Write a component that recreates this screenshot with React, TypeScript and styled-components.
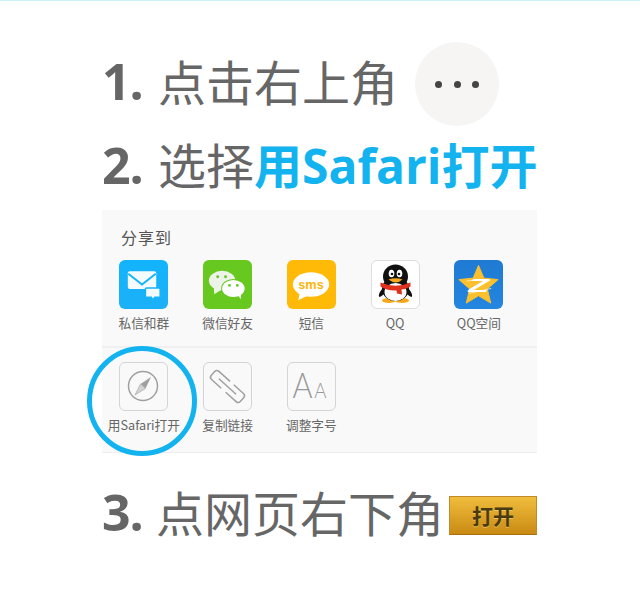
import { ReactElement, ReactNode } from "react";
import styled, { createGlobalStyle } from "styled-components";

const GlobalStyle = createGlobalStyle`
  html, body {
    margin: 0;
    padding: 0;
    background: #fff;
    font-family: "Noto Sans CJK SC", "Liberation Sans", sans-serif;
  }
`;

const Page = styled.div`
  width: 640px;
  height: 600px;
  box-sizing: border-box;
  border-top: 1px solid #cdeefb;
  padding: 41px 0 0 102px;
  overflow: hidden;
`;

const Content = styled.div`
  width: 435px;
  display: flex;
  flex-direction: column;
`;

const Step = styled.div<{ $gap?: number }>`
  height: 84px;
  margin-top: ${(p) => p.$gap ?? 0}px;
  display: flex;
  align-items: center;
  color: #666;
  font-size: 48px;
  line-height: 1;
  white-space: nowrap;
`;

const StepText = styled.span`
  margin-bottom: 8px;
`;

const Number = styled.span<{ $width: number }>`
  width: ${(p) => p.$width}px;
  flex: none;
  margin-bottom: 6px;
  font-family: "Open Sans", sans-serif;
  font-weight: 700;
  font-size: 50px;
  letter-spacing: -1px;
`;

const Highlight = styled.span`
  color: #12b3ee;
  font-weight: 700;
`;

const Latin = styled.span`
  font-family: "Open Sans", "Noto Sans CJK SC", sans-serif;
`;

const MoreButton = styled.div`
  width: 84px;
  height: 84px;
  margin-left: 17px;
  border-radius: 50%;
  background: #f6f5f4;
  display: flex;
  align-items: center;
  justify-content: center;
  gap: 11.5px;
`;

const Dot = styled.i`
  width: 7px;
  height: 7px;
  border-radius: 50%;
  background: #444;
`;

const Panel = styled.div`
  background: #f9f9f9;
  border-bottom: 1px solid #eee;
  height: 242px;
  display: flex;
  flex-direction: column;
`;

const PanelTitle = styled.div`
  padding: 16px 0 0 19px;
  height: 33px;
  font-size: 16px;
  line-height: 22px;
  letter-spacing: 1px;
  color: #555;
`;

const ShareRow = styled.div`
  height: 86px;
  padding-top: 1px;
  display: grid;
  grid-template-columns: repeat(5, 83.75px);
  align-content: start;
`;

const ToolRow = styled(ShareRow)`
  border-top: 2px solid #f0f0f0;
  height: auto;
  padding-top: 14px;
`;

const Cell = styled.div`
  position: relative;
  display: flex;
  flex-direction: column;
  align-items: center;
`;

const Tile = styled.div<{ $bg: string; $border?: string }>`
  width: 49px;
  height: 49px;
  box-sizing: border-box;
  border-radius: 6px;
  background: ${(p) => p.$bg};
  border: ${(p) => (p.$border ? `1.5px solid ${p.$border}` : "none")};
  overflow: hidden;
  svg {
    display: block;
    width: 100%;
    height: 100%;
  }
`;

const Label = styled.div`
  margin-top: 5px;
  font-size: 12.7px;
  line-height: 18px;
  color: #666;
  white-space: nowrap;
`;

const Ring = styled.div`
  position: absolute;
  left: -15px;
  top: -16px;
  width: 110px;
  height: 110px;
  box-sizing: border-box;
  border: 5px solid #12b3ee;
  border-radius: 50%;
  pointer-events: none;
`;

const OpenButton = styled.div`
  width: 88px;
  height: 39px;
  margin-left: 5px;
  box-sizing: border-box;
  border: 1px solid #c08a28;
  border-bottom-color: #a8700f;
  background: linear-gradient(#f0bd3c, #c98a14);
  display: flex;
  align-items: center;
  justify-content: center;
  font-size: 21px;
  font-weight: 700;
  color: #4a3a12;
  text-shadow: 0 1px 0 rgba(255, 230, 150, 0.5);
`;

const MailIcon = () => (
  <svg viewBox="0 0 50 50">
    <rect x="9" y="11.5" width="29" height="18" rx="2" fill="#f4fbff" />
    <path d="M9.5 14 L23.5 25 L37.5 14" fill="none" stroke="#16b4fb" strokeWidth="2" />
    <path d="M28 28.5 H41 a1 1 0 0 1 1 1 V37 a1 1 0 0 1 -1 1 H36.5 L34.500 41 L33 38 H28 a1 1 0 0 1 -1 -1 V29.500 a1 1 0 0 1 1 -1 Z" fill="#f4fbff" stroke="#16b4fb" strokeWidth="1.5" />
  </svg>
);

const WechatIcon = () => (
  <svg viewBox="0 0 50 50">
    <ellipse cx="19.500" cy="21" rx="13.500" ry="10" fill="#eef3ea" />
    <path d="M11 27 L11.500 35 L19 30 Z" fill="#eef3ea" />
    <circle cx="15" cy="17" r="1.500" fill="#67c81f" />
    <circle cx="23" cy="17" r="1.500" fill="#67c81f" />
    <ellipse cx="31" cy="29" rx="11.500" ry="8.700" fill="#67c81f" stroke="#67c81f" strokeWidth="2" />
    <ellipse cx="31" cy="29" rx="11.500" ry="8.700" fill="#fff" />
    <path d="M35 35 L38.500 40 L39 33 Z" fill="#fff" />
    <circle cx="27" cy="26" r="1.400" fill="#67c81f" />
    <circle cx="35" cy="26" r="1.400" fill="#67c81f" />
  </svg>
);

const SmsIcon = () => (
  <svg viewBox="0 0 50 50">
    <ellipse cx="24.500" cy="25" rx="18.500" ry="12.500" fill="#fff" />
    <path d="M13 33 L11.500 41 L22 36 Z" fill="#fff" />
    <text x="24.500" y="29.500" textAnchor="middle" fontFamily="'Liberation Sans', sans-serif" fontWeight="700" fontSize="13" fill="#fdb40c">
      sms
    </text>
  </svg>
);

const PenguinIcon = () => (
  <svg viewBox="0 0 47 47">
    <ellipse cx="17" cy="39.500" rx="7" ry="2.500" fill="#f6a91c" />
    <ellipse cx="30" cy="39.500" rx="7" ry="2.500" fill="#f6a91c" />
    <path d="M12 26 C7 31 6 35 7.500 36 C9 35.500 11 34 12 33 Z M35 26 C40 31 41 35 39.500 36 C38 35.500 36 34 35 33 Z" fill="#111" />
    <ellipse cx="23.500" cy="15.500" rx="12.500" ry="12" fill="#111" />
    <ellipse cx="23.500" cy="28" rx="13.500" ry="12" fill="#111" />
    <ellipse cx="23.500" cy="31" rx="11" ry="9" fill="#fff" />
    <ellipse cx="19.500" cy="12.500" rx="2.800" ry="3.800" fill="#fff" />
    <ellipse cx="27.500" cy="12.500" rx="2.800" ry="3.800" fill="#fff" />
    <circle cx="20" cy="13" r="1.300" fill="#111" />
    <circle cx="27" cy="13" r="1.300" fill="#111" />
    <path d="M16.500 18.500 Q23.500 16 30.500 18.500 Q24 24.500 16.500 18.500 Z" fill="#f6a91c" />
    <path d="M8.500 21.500 Q23.500 28 38.500 21.500 L38.500 25.500 Q34 28.500 29.500 28.500 L30 33.500 L25 32.500 L24.500 29.500 Q15 30 8.500 25.500 Z" fill="#e0301e" />
  </svg>
);

const QzoneIcon = () => (
  <svg viewBox="0 0 50 50">
    <path d="M25 5.500 L30.500 18.500 L45 20 L34 29.500 L37.500 44 L25 36.500 L12.500 44 L16 29.500 L5 20 L19.500 18.500 Z" fill="#fcc02d" stroke="#fcc02d" strokeWidth="1" strokeLinejoin="round" />
    <path d="M13 21.500 Q25 18.500 37 21 M15 34 Q26 32 38 29" fill="none" stroke="#fff3c9" strokeWidth="0.800" />
    <text x="25" y="33" textAnchor="middle" textLength="21" lengthAdjust="spacingAndGlyphs" fontFamily="'Liberation Sans', sans-serif" fontStyle="italic" fontWeight="700" fontSize="18" fill="#fff">
      Z
    </text>
  </svg>
);

const CompassIcon = () => (
  <svg viewBox="0 0 47 47">
    <circle cx="23" cy="23" r="14.500" fill="none" stroke="#a0a0a0" strokeWidth="1.500" />
    <path d="M31 14 L25.500 25.500 L20.500 21 Z" fill="#a0a0a0" />
    <path d="M15 32 L25.500 25.500 L20.500 21 Z" fill="#d4d4d4" stroke="#a0a0a0" strokeWidth="0.600" />
  </svg>
);

const ClipIcon = () => (
  <svg viewBox="0 0 47 47">
    <g transform="rotate(42 23.500 23.500)" fill="none" stroke="#a0a0a0" strokeWidth="1.500">
      <path d="M22 18 H7 a3 3 0 0 0 -3 3 v5 a3 3 0 0 0 3 3 H20" />
      <path d="M26 29 H40 a3 3 0 0 0 3 -3 v-5 a3 3 0 0 0 -3 -3 H27" />
      <path d="M12 23.500 H35" />
    </g>
  </svg>
);

const FontSizeIcon = () => (
  <svg viewBox="0 0 47 47">
    <text transform="scale(0.85 1)" x="5.300" y="35" fontFamily="Lato, sans-serif" fontWeight="300" fill="#999">
      <tspan fontSize="36">A</tspan>
      <tspan fontSize="22" dx="2">
        A
      </tspan>
    </text>
  </svg>
);

type Item = { label: string; bg: string; border?: string; icon: ReactNode };

const shareItems: Item[] = [
  { label: "私信和群", bg: "linear-gradient(#12b4fc, #1cb0f8)", icon: <MailIcon /> },
  { label: "微信好友", bg: "#67c81f", icon: <WechatIcon /> },
  { label: "短信", bg: "#ffb907", icon: <SmsIcon /> },
  { label: "QQ", bg: "#fff", border: "#ddd", icon: <PenguinIcon /> },
  { label: "QQ空间", bg: "linear-gradient(#1f7ad2, #2386e0)", icon: <QzoneIcon /> },
];

const toolItems: Item[] = [
  { label: "用Safari打开", bg: "#f9f9f9", border: "#d4d4d4", icon: <CompassIcon /> },
  { label: "复制链接", bg: "#f9f9f9", border: "#d4d4d4", icon: <ClipIcon /> },
  { label: "调整字号", bg: "#f9f9f9", border: "#d4d4d4", icon: <FontSizeIcon /> },
];

export default function App(): ReactElement {
  return (
    <Page>
      <GlobalStyle />
      <Content>
        <Step>
          <Number $width={56}>1.</Number>
          <StepText>点击右上角</StepText>
          <MoreButton>
            <Dot />
            <Dot />
            <Dot />
          </MoreButton>
        </Step>
        <Step>
          <Number $width={56}>2.</Number>
          <StepText>
            选择
            <Highlight>
              用<Latin>Safari</Latin>打开
            </Highlight>
          </StepText>
        </Step>
        <Panel>
          <PanelTitle>分享到</PanelTitle>
          <ShareRow>
            {shareItems.map((item) => (
              <Cell key={item.label}>
                <Tile $bg={item.bg} $border={item.border}>
                  {item.icon}
                </Tile>
                <Label>{item.label}</Label>
              </Cell>
            ))}
          </ShareRow>
          <ToolRow>
            {toolItems.map((item, i) => (
              <Cell key={item.label}>
                <Tile $bg={item.bg} $border={item.border}>
                  {item.icon}
                </Tile>
                <Label>{item.label}</Label>
                {i === 0 && <Ring />}
              </Cell>
            ))}
          </ToolRow>
        </Panel>
        <Step $gap={20}>
          <Number $width={54}>3.</Number>
          <StepText>点网页右下角</StepText>
          <OpenButton>打开</OpenButton>
        </Step>
      </Content>
    </Page>
  );
}
